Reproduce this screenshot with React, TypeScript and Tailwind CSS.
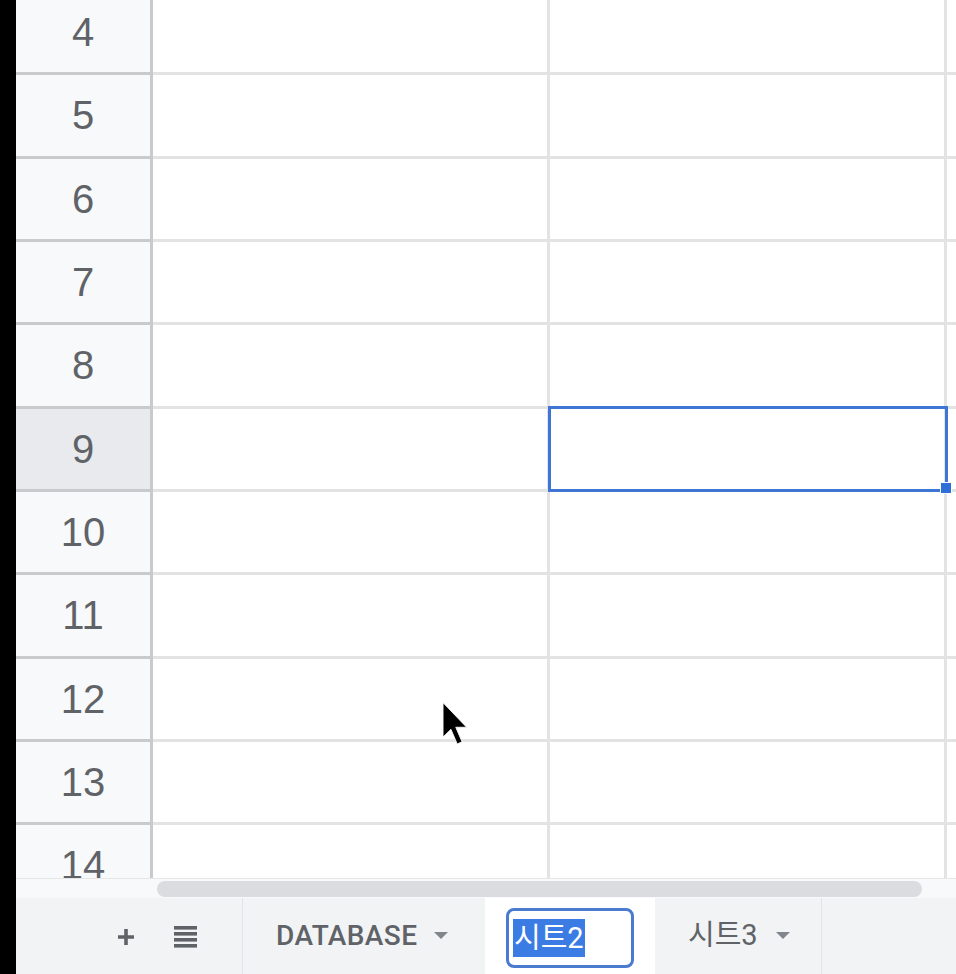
import React from "react";

const rows = [4, 5, 6, 7, 8, 9, 10, 11, 12, 13, 14];

function Caret() {
  return (
    <svg width="14" height="8" viewBox="0 0 14 8" className="shrink-0">
      <path d="M0 0 L14 0 L7 7 Z" fill="#80868b" />
    </svg>
  );
}

export default function App() {
  return (
    <div
      className="flex w-[956px] h-[974px] overflow-hidden bg-black"
      style={{ fontFamily: "'Liberation Sans', Arial, sans-serif" }}
    >
      <div className="w-[16px] shrink-0 bg-black" />
      <div className="flex flex-col w-[940px] h-[974px] bg-white">
        {/* Grid */}
        <div className="relative h-[878px] shrink-0 overflow-hidden">
          <div className="flex flex-col mt-[-8px]">
            {rows.map((n) => (
              <div key={n} className="flex h-[83.33px] shrink-0">
                {n === 9 ? (
                  <div className="w-[137px] shrink-0 flex items-center justify-center border-b-[3px] border-r-[3px] border-[#c9cacc] bg-[#e8eaed] text-[40px] text-[#5f6368]">
                    {n}
                  </div>
                ) : (
                  <div className="w-[137px] shrink-0 flex items-center justify-center border-b-[3px] border-r-[3px] border-[#c9cacc] bg-[#f8f9fa] text-[40px] text-[#5f6368]">
                    {n}
                  </div>
                )}
                <div className="w-[397px] shrink-0 border-b-[3px] border-r-[3px] border-[#e3e3e3] bg-white" />
                <div className="w-[397px] shrink-0 border-b-[3px] border-r-[3px] border-[#e3e3e3] bg-white" />
                <div className="flex-1 border-b-[3px] border-[#e3e3e3] bg-white" />
              </div>
            ))}
          </div>
          {/* selected cell B9 */}
          <div className="absolute left-[532px] top-[406px] w-[400px] h-[86px] border-[3px] border-[#3f76d3]" />
          <div className="absolute left-[924px] top-[482px] w-[12px] h-[12px] bg-[#2f6fd8] border border-white" />
          {/* mouse cursor */}
          <svg
            className="absolute left-[426px] top-[701px]"
            width="25"
            height="45"
            viewBox="0 0 12 21"
          >
            <path
              d="M0.5 0.5 L0.5 17 L4.3 13.3 L7.3 20.3 L9.6 19.3 L6.6 12.3 L11.8 12.3 Z"
              fill="#000"
              stroke="#fff"
              strokeWidth="0.4"
            />
          </svg>
        </div>

        {/* Horizontal scroll area */}
        <div className="flex items-center h-[20px] shrink-0 bg-[#f8f9fa] border-t border-[#e6e6e6]">
          <div className="w-[141px] shrink-0" />
          <div className="w-[765px] h-[16px] rounded-full bg-[#dadce0]" />
        </div>

        {/* Sheet tab bar */}
        <div
          className="flex h-[76px] shrink-0 bg-[#f1f3f4]"
          style={{ fontFamily: "Roboto, 'Noto Sans CJK KR', sans-serif" }}
        >
          <div className="relative w-[227px] shrink-0 border-r border-[#e2e4e7]">
            <svg
              className="absolute left-[101px] top-[30px]"
              width="18"
              height="18"
              viewBox="0 0 18 18"
            >
              <path d="M9 1 V17 M1 9 H17" stroke="#5f6368" strokeWidth="3.6" />
            </svg>
            <svg
              className="absolute left-[158px] top-[28px]"
              width="23"
              height="22"
              viewBox="0 0 23 22"
            >
              <rect x="0" y="0" width="23" height="3.6" fill="#5f6368" />
              <rect x="0" y="6" width="23" height="3.6" fill="#5f6368" />
              <rect x="0" y="12" width="23" height="3.6" fill="#5f6368" />
              <rect x="0" y="18" width="23" height="3.6" fill="#5f6368" />
            </svg>
          </div>
          <div className="flex items-center w-[242px] shrink-0 pl-[33px] gap-[17px]">
            <span className="text-[28px] font-medium text-[#5f6368] tracking-[0.4px]">
              DATABASE
            </span>
            <Caret />
          </div>
          <div className="w-[170px] shrink-0 bg-white pl-[21px] pt-[10px]">
            <div className="flex items-center w-[128px] h-[60px] rounded-[8px] border-[3px] border-[#4a7bd0] pl-[4px]">
              <span className="bg-[#3b7be4] text-white text-[29px] leading-[38px] px-[1px]">
                시트2
              </span>
            </div>
          </div>
          <div className="flex items-center w-[167px] shrink-0 pl-[33px] gap-[18px] border-r border-[#e2e4e7]">
            <span className="text-[29px] text-[#5f6368]">시트3</span>
            <Caret />
          </div>
          <div className="flex-1" />
        </div>
      </div>
    </div>
  );
}
